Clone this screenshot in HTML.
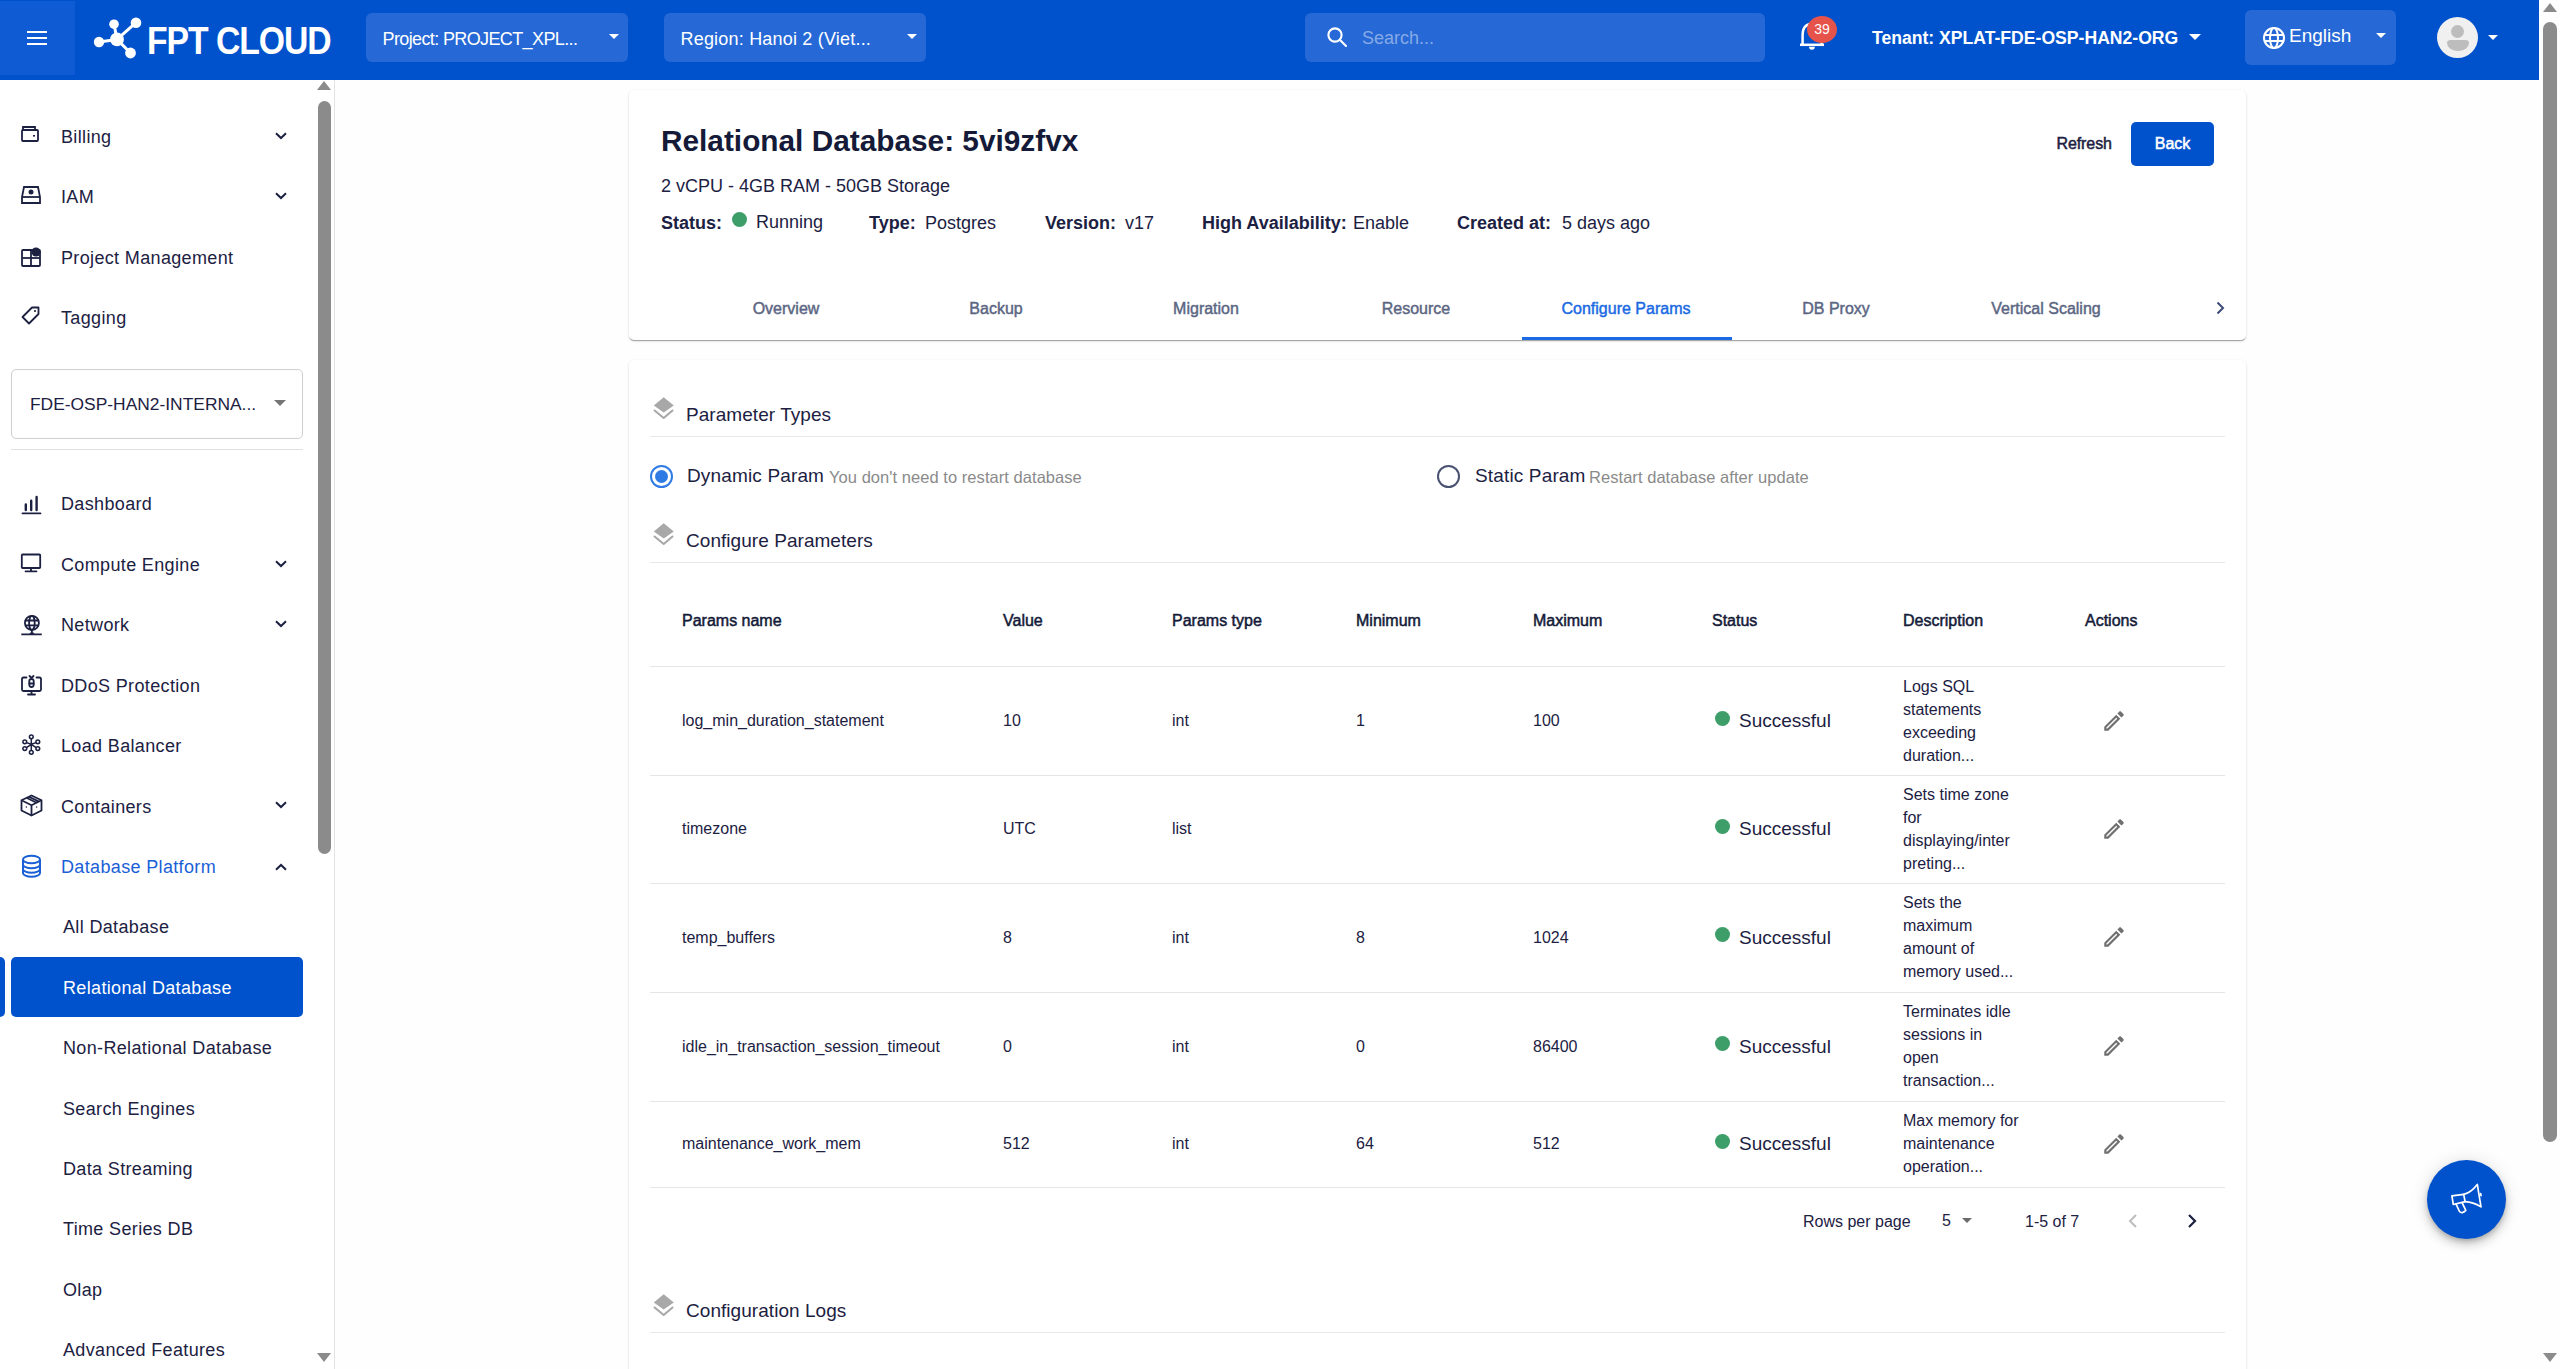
<!DOCTYPE html><html><head><meta charset="utf-8"><style>
*{margin:0;padding:0;box-sizing:border-box}
html,body{width:2560px;height:1369px;overflow:hidden;background:#fefefe;font-family:"Liberation Sans",sans-serif}
.t{position:absolute;white-space:nowrap;line-height:40px;height:40px}
.a{position:absolute}
svg{position:absolute;overflow:visible}
</style></head><body>
<div class="a" style="left:0;top:0;width:2539px;height:80px;background:#0052cc"></div>
<div class="a" style="left:0;top:1px;width:75px;height:74px;background:#0f5bd3"></div>
<div class="a" style="left:26.8px;top:30.9px;width:20.7px;height:2.3px;background:#fff"></div>
<div class="a" style="left:26.8px;top:36.7px;width:20.7px;height:2.3px;background:#fff"></div>
<div class="a" style="left:26.8px;top:42.5px;width:20.7px;height:2.3px;background:#fff"></div>
<svg style="left:90px;top:14px" width="56" height="48" viewBox="0 0 56 48">
<g stroke="#fff" stroke-width="3" fill="none"><line x1="27" y1="25.4" x2="24" y2="10.2"/><line x1="27" y1="25.4" x2="46" y2="8.7"/><line x1="27" y1="25.4" x2="9" y2="28"/><line x1="27" y1="25.4" x2="40.5" y2="39"/></g>
<g fill="#fff"><circle cx="27" cy="25.4" r="6.9"/><circle cx="24" cy="10.2" r="4.8"/><circle cx="46" cy="8.7" r="5.3"/><circle cx="9" cy="28" r="5.2"/><circle cx="40.5" cy="39" r="5.4"/></g></svg>
<div class="t" style="left:146.8px;top:20.5px;font-size:39px;font-weight:700;color:#fff;letter-spacing:-1.2px;transform:scaleX(0.865);transform-origin:0 50%">FPT CLOUD</div>
<div class="a" style="left:366px;top:13px;width:262px;height:49px;background:#2669d6;border-radius:6px"></div>
<div class="t" style="left:382.5px;top:18.6px;font-size:18px;font-weight:400;color:#fff;letter-spacing:-0.62px;">Project: PROJECT_XPL...</div>
<div class="a" style="left:609px;top:34px;width:0;height:0;border-left:5.5px solid transparent;border-right:5.5px solid transparent;border-top:5.5px solid #fff"></div>
<div class="a" style="left:664px;top:13px;width:262px;height:49px;background:#2669d6;border-radius:6px"></div>
<div class="t" style="left:680.5px;top:18.6px;font-size:18px;font-weight:400;color:#fff;letter-spacing:0.2px;">Region: Hanoi 2 (Viet...</div>
<div class="a" style="left:907px;top:34px;width:0;height:0;border-left:5.5px solid transparent;border-right:5.5px solid transparent;border-top:5.5px solid #fff"></div>
<div class="a" style="left:1305px;top:13px;width:460px;height:49px;background:#2669d6;border-radius:6px"></div>
<svg style="left:1315px;top:15px" width="50" height="45" viewBox="0 0 50 45"><g fill="none" stroke="#fff" stroke-width="2.1" stroke-linecap="round"><circle cx="20" cy="20" r="6.6"/><path d="M24.8 24.8 31 31"/></g></svg>
<div class="t" style="left:1362px;top:18.0px;font-size:18px;font-weight:400;color:#86a9e6;letter-spacing:0px;">Search...</div>
<svg style="left:1795px;top:15px" width="35" height="40" viewBox="0 0 35 40"><g fill="none" stroke="#fff" stroke-width="2.5"><path d="M7.6 30V20Q7.6 9.5 17 8.5Q26.6 9.5 26.6 20V30"/><path d="M5 29.8H29"/></g><path d="M14 31.8h5.8a2.9 2.9 0 0 1 -5.8 0z" fill="#fff"/></svg>
<div class="a" style="left:1807px;top:16px;width:30px;height:27px;border-radius:15px/13.5px;background:#e5534b;color:#fff;font-size:14px;line-height:27px;text-align:center">39</div>
<div class="t" style="left:1872px;top:18.0px;font-size:17.6px;font-weight:700;color:#fff;letter-spacing:0px;">Tenant: XPLAT-FDE-OSP-HAN2-ORG</div>
<div class="a" style="left:2189px;top:34px;width:0;height:0;border-left:6px solid transparent;border-right:6px solid transparent;border-top:6px solid #fff"></div>
<div class="a" style="left:2245px;top:10px;width:151px;height:55px;background:#2669d6;border-radius:6px"></div>
<svg style="left:2262px;top:26px" width="24" height="24" viewBox="0 0 24 24"><g fill="none" stroke="#fff" stroke-width="2"><circle cx="12" cy="12" r="10"/><ellipse cx="12" cy="12" rx="4" ry="10"/><line x1="2" y1="9" x2="22" y2="9"/><line x1="2" y1="15" x2="22" y2="15"/></g></svg>
<div class="t" style="left:2289px;top:16.0px;font-size:19px;font-weight:400;color:#fff;letter-spacing:0px;">English</div>
<div class="a" style="left:2376px;top:33px;width:0;height:0;border-left:5.5px solid transparent;border-right:5.5px solid transparent;border-top:5.5px solid #fff"></div>
<div class="a" style="left:2437px;top:17px;width:41px;height:41px;border-radius:21px;background:#f0f0f0"></div>
<div class="a" style="left:2451px;top:24.5px;width:13px;height:13px;border-radius:7px;background:#bdbdbd"></div>
<div class="a" style="left:2447px;top:40px;width:21.5px;height:10.5px;border-radius:4px 4px 11px 11px/3px 3px 9px 9px;background:#bdbdbd"></div>
<div class="a" style="left:2488px;top:35px;width:0;height:0;border-left:5.5px solid transparent;border-right:5.5px solid transparent;border-top:5.5px solid #fff"></div>
<div class="a" style="left:2539px;top:0;width:21px;height:1369px;background:#fefefe"></div>
<div class="a" style="left:2543px;top:3px;width:0;height:0;border-left:7px solid transparent;border-right:7px solid transparent;border-bottom:9px solid #8b8b8b"></div>
<div class="a" style="left:2543px;top:22px;width:14px;height:1120px;border-radius:7px;background:#8b8b8b"></div>
<div class="a" style="left:2543px;top:1353px;width:0;height:0;border-left:7px solid transparent;border-right:7px solid transparent;border-top:9px solid #8b8b8b"></div>
<div class="a" style="left:0;top:80px;width:335px;height:1289px;background:#fff;border-right:1px solid #e3e3e3"></div>
<div class="a" style="left:317px;top:81px;width:0;height:0;border-left:7px solid transparent;border-right:7px solid transparent;border-bottom:9px solid #8b8b8b"></div>
<div class="a" style="left:317.7px;top:101px;width:13.3px;height:753px;border-radius:7px;background:#8b8b8b"></div>
<div class="a" style="left:317px;top:1353px;width:0;height:0;border-left:7px solid transparent;border-right:7px solid transparent;border-top:9px solid #8b8b8b"></div>
<div class="t" style="left:61px;top:116.5px;font-size:18px;font-weight:400;color:#1c2142;letter-spacing:0.35px;">Billing</div>
<svg style="left:275px;top:131.5px" width="12" height="8" viewBox="0 0 12 8"><path d="M1 1.2 6 6 11 1.2" fill="none" stroke="#1c2142" stroke-width="2"/></svg>
<div class="t" style="left:61px;top:177.3px;font-size:18px;font-weight:400;color:#1c2142;letter-spacing:0.35px;">IAM</div>
<svg style="left:275px;top:192.3px" width="12" height="8" viewBox="0 0 12 8"><path d="M1 1.2 6 6 11 1.2" fill="none" stroke="#1c2142" stroke-width="2"/></svg>
<div class="t" style="left:61px;top:237.5px;font-size:18px;font-weight:400;color:#1c2142;letter-spacing:0.35px;">Project Management</div>
<div class="t" style="left:61px;top:297.5px;font-size:18px;font-weight:400;color:#1c2142;letter-spacing:0.35px;">Tagging</div>
<svg style="left:21px;top:126px" width="18" height="16" viewBox="0 0 18 16"><g fill="none" stroke="#1c2142" stroke-width="1.8"><rect x="1" y="4" width="16" height="11" rx="1"/><path d="M2 4V1h12v3"/></g><rect x="12" y="9" width="2" height="1.6" fill="#1c2142"/></svg>
<svg style="left:21px;top:185px" width="20" height="19" viewBox="0 0 20 19"><g fill="none" stroke="#1c2142" stroke-width="1.8"><path d="M3 2h14l2 10v6H1v-6z"/><line x1="1" y1="12" x2="19" y2="12"/></g><circle cx="10" cy="7" r="2.5" fill="#1c2142"/></svg>
<svg style="left:21px;top:247px" width="20" height="20" viewBox="0 0 20 20"><g fill="none" stroke="#1c2142" stroke-width="1.8"><rect x="1" y="3" width="18" height="16" rx="1"/><line x1="10" y1="3" x2="10" y2="19"/><line x1="1" y1="11" x2="19" y2="11"/></g><circle cx="15" cy="5" r="4.5" fill="#1c2142"/></svg>
<svg style="left:21px;top:306px" width="19" height="19" viewBox="0 0 19 19"><path d="M11 1.5h6.5V8L8 17.5 1.5 11z" fill="none" stroke="#1c2142" stroke-width="1.8" stroke-linejoin="round"/><circle cx="14" cy="5" r="1.1" fill="#1c2142"/></svg>
<div class="a" style="left:11px;top:369px;width:292px;height:70px;border:1px solid #cfcfcf;border-radius:5px;background:#fff"></div>
<div class="t" style="left:30px;top:384.0px;font-size:17.4px;font-weight:400;color:#1c2142;letter-spacing:0px;">FDE-OSP-HAN2-INTERNA...</div>
<div class="a" style="left:274px;top:400px;width:0;height:0;border-left:6px solid transparent;border-right:6px solid transparent;border-top:6px solid #757575"></div>
<div class="a" style="left:11px;top:449px;width:292px;height:1px;background:#e0e0e0"></div>
<div class="t" style="left:61px;top:484.3px;font-size:18px;font-weight:400;color:#1c2142;letter-spacing:0.35px;">Dashboard</div>
<div class="t" style="left:61px;top:544.7px;font-size:18px;font-weight:400;color:#1c2142;letter-spacing:0.35px;">Compute Engine</div>
<svg style="left:275px;top:559.73px" width="12" height="8" viewBox="0 0 12 8"><path d="M1 1.2 6 6 11 1.2" fill="none" stroke="#1c2142" stroke-width="2"/></svg>
<div class="t" style="left:61px;top:605.2px;font-size:18px;font-weight:400;color:#1c2142;letter-spacing:0.35px;">Network</div>
<svg style="left:275px;top:620.16px" width="12" height="8" viewBox="0 0 12 8"><path d="M1 1.2 6 6 11 1.2" fill="none" stroke="#1c2142" stroke-width="2"/></svg>
<div class="t" style="left:61px;top:665.6px;font-size:18px;font-weight:400;color:#1c2142;letter-spacing:0.35px;">DDoS Protection</div>
<div class="t" style="left:61px;top:726.0px;font-size:18px;font-weight:400;color:#1c2142;letter-spacing:0.35px;">Load Balancer</div>
<div class="t" style="left:61px;top:786.5px;font-size:18px;font-weight:400;color:#1c2142;letter-spacing:0.35px;">Containers</div>
<svg style="left:275px;top:801.45px" width="12" height="8" viewBox="0 0 12 8"><path d="M1 1.2 6 6 11 1.2" fill="none" stroke="#1c2142" stroke-width="2"/></svg>
<div class="t" style="left:61px;top:846.9px;font-size:18px;font-weight:400;color:#1a5fd6;letter-spacing:0.35px;">Database Platform</div>
<svg style="left:275px;top:862.88px" width="12" height="8" viewBox="0 0 12 8"><path d="M1 6.8 6 2 11 6.8" fill="none" stroke="#1c2142" stroke-width="2"/></svg>
<svg style="left:21px;top:495px" width="21" height="20" viewBox="0 0 21 20"><g stroke="#1c2142" stroke-linecap="round" fill="none"><path d="M4.8 9.5v5.5M10.2 5.8v9.2M15.6 2v13" stroke-width="2.4"/><path d="M1.5 18.4h18" stroke-width="1.8"/></g></svg>
<svg style="left:20px;top:553px" width="22" height="20" viewBox="0 0 22 20"><g stroke="#1c2142" fill="none" stroke-width="1.8" stroke-linecap="round"><rect x="1.8" y="1.5" width="18.4" height="13.5" rx="0.8"/><path d="M11 15v3.2M5.5 18.3h11"/></g></svg>
<svg style="left:20px;top:613px" width="23" height="23" viewBox="0 0 23 23"><g stroke="#1c2142" fill="none" stroke-width="1.8"><circle cx="11.9" cy="9.9" r="7"/><ellipse cx="11.9" cy="9.9" rx="2.8" ry="7"/><path d="M5 7.5h13.8M5 12.3h13.8"/><path d="M1.3 21.4h20.5M11.9 17v2.5l-2.2 1.9M11.9 19.5l2.2 1.9"/></g></svg>
<svg style="left:20px;top:674px" width="23" height="23" viewBox="0 0 23 23"><g stroke="#1c2142" fill="none" stroke-width="1.8" stroke-linecap="round"><path d="M6.5 3.5H3.5Q2 3.5 2 5v10.5Q2 17 3.5 17h16Q21 17 21 15.5V5Q21 3.5 19.5 3.5h-3"/><path d="M11.5 17v3.5M8 20.5h7"/><rect x="9.3" y="5" width="4.4" height="8" rx="2.2"/><path d="M9.5 2l2 2 2-2M9.3 9.5h4.4"/></g></svg>
<svg style="left:20px;top:733px" width="23" height="23" viewBox="0 0 23 23"><g stroke="#1c2142" fill="none" stroke-width="1.5"><circle cx="11.3" cy="3.8" r="1.9"/><circle cx="4.8" cy="8.8" r="1.9"/><circle cx="17.8" cy="8.8" r="1.9"/><circle cx="4.8" cy="15.6" r="1.9"/><circle cx="17.8" cy="15.6" r="1.9"/><circle cx="11.3" cy="19.3" r="1.9"/><path d="M11.3 5.7v11.7M11.3 11.3l-4.8-1.7M11.3 11.3l4.8-1.7M11.3 11.3l-4.8 3.3M11.3 11.3l4.8 3.3"/></g></svg>
<svg style="left:20px;top:794px" width="23" height="23" viewBox="0 0 23 23"><g stroke="#1c2142" fill="none" stroke-width="1.8" stroke-linejoin="round"><path d="M11.5 1.5 21.5 6.3v10.2L11.5 21.5 1.5 16.5V6.3z"/><path d="M1.5 6.3 11.5 11.2 21.5 6.3M11.5 11.2v10.3M6.5 3.8l10 5M9 2.7l10 4.9"/></g><circle cx="6.4" cy="13" r="0.8" fill="#1c2142"/><circle cx="16.6" cy="13" r="0.8" fill="#1c2142"/></svg>
<svg style="left:21px;top:854px" width="21" height="24" viewBox="0 0 21 24"><g stroke="#1a5fd6" fill="none" stroke-width="2"><ellipse cx="10.5" cy="5.5" rx="8.5" ry="3.8"/><path d="M2 5.5v13.5c0 2.1 3.8 3.8 8.5 3.8s8.5-1.7 8.5-3.8V5.5M2 10.5c0 2.1 3.8 3.8 8.5 3.8s8.5-1.7 8.5-3.8M2 15c0 2.1 3.8 3.8 8.5 3.8s8.5-1.7 8.5-3.8"/></g></svg>
<div class="a" style="left:11px;top:957px;width:292px;height:60px;border-radius:5px;background:#0052cc"></div>
<div class="a" style="left:-6px;top:957px;width:11px;height:60px;border-radius:5px;background:#0052cc"></div>
<div class="t" style="left:63px;top:907.3px;font-size:18px;font-weight:400;color:#1c2142;letter-spacing:0.35px;">All Database</div>
<div class="t" style="left:63px;top:967.7px;font-size:18px;font-weight:400;color:#fff;letter-spacing:0.35px;">Relational Database</div>
<div class="t" style="left:63px;top:1028.2px;font-size:18px;font-weight:400;color:#1c2142;letter-spacing:0.35px;">Non-Relational Database</div>
<div class="t" style="left:63px;top:1088.6px;font-size:18px;font-weight:400;color:#1c2142;letter-spacing:0.35px;">Search Engines</div>
<div class="t" style="left:63px;top:1149.0px;font-size:18px;font-weight:400;color:#1c2142;letter-spacing:0.35px;">Data Streaming</div>
<div class="t" style="left:63px;top:1209.4px;font-size:18px;font-weight:400;color:#1c2142;letter-spacing:0.35px;">Time Series DB</div>
<div class="t" style="left:63px;top:1269.9px;font-size:18px;font-weight:400;color:#1c2142;letter-spacing:0.35px;">Olap</div>
<div class="t" style="left:63px;top:1330.3px;font-size:18px;font-weight:400;color:#1c2142;letter-spacing:0.35px;">Advanced Features</div>
<div class="a" style="left:629px;top:90px;width:1617px;height:250px;background:#fff;border-radius:5px;box-shadow:0 2px 1px -1px rgba(0,0,0,.2),0 1px 1px 0 rgba(0,0,0,.14),0 1px 3px 0 rgba(0,0,0,.12)"></div>
<div class="t" style="left:661px;top:121.1px;font-size:29.8px;font-weight:700;color:#141a38;letter-spacing:0px;">Relational Database: 5vi9zfvx</div>
<div class="t" style="left:661px;top:166.0px;font-size:18px;font-weight:400;color:#1c2142;letter-spacing:0px;">2 vCPU - 4GB RAM - 50GB Storage</div>
<div class="t" style="left:2056.5px;top:123.5px;font-size:16px;font-weight:400;color:#1c2142;letter-spacing:-0.1px;-webkit-text-stroke:0.5px #1c2142">Refresh</div>
<div class="a" style="left:2131px;top:122px;width:83px;height:44px;background:#0052cc;border-radius:5px;color:#fff;font-size:16px;font-weight:400;-webkit-text-stroke:0.5px #fff;line-height:44px;text-align:center">Back</div>
<div class="t" style="left:661px;top:202.8px;font-size:18px;font-weight:700;color:#1c2142;letter-spacing:0px;">Status:</div>
<div class="a" style="left:732px;top:212px;width:15px;height:15px;border-radius:8px;background:#3d9e6a"></div>
<div class="t" style="left:756px;top:202.0px;font-size:18px;font-weight:400;color:#1c2142;letter-spacing:0px;">Running</div>
<div class="t" style="left:869px;top:202.5px;font-size:18px;font-weight:700;color:#1c2142;letter-spacing:0px;">Type:</div>
<div class="t" style="left:925px;top:202.5px;font-size:18px;font-weight:400;color:#1c2142;letter-spacing:0px;">Postgres</div>
<div class="t" style="left:1045px;top:202.5px;font-size:18px;font-weight:700;color:#1c2142;letter-spacing:0px;">Version:</div>
<div class="t" style="left:1125px;top:202.5px;font-size:18px;font-weight:400;color:#1c2142;letter-spacing:0px;">v17</div>
<div class="t" style="left:1202px;top:202.5px;font-size:18px;font-weight:700;color:#1c2142;letter-spacing:0px;">High Availability:</div>
<div class="t" style="left:1353px;top:202.5px;font-size:18px;font-weight:400;color:#1c2142;letter-spacing:0px;">Enable</div>
<div class="t" style="left:1457px;top:202.5px;font-size:18px;font-weight:700;color:#1c2142;letter-spacing:0px;">Created at:</div>
<div class="t" style="left:1562px;top:202.5px;font-size:18px;font-weight:400;color:#1c2142;letter-spacing:0px;">5 days ago</div>
<div class="t" style="left:681px;top:288.6px;width:210px;text-align:center;font-size:16px;font-weight:400;-webkit-text-stroke:0.45px #5b6683;color:#5b6683">Overview</div>
<div class="t" style="left:891px;top:288.6px;width:210px;text-align:center;font-size:16px;font-weight:400;-webkit-text-stroke:0.45px #5b6683;color:#5b6683">Backup</div>
<div class="t" style="left:1101px;top:288.6px;width:210px;text-align:center;font-size:16px;font-weight:400;-webkit-text-stroke:0.45px #5b6683;color:#5b6683">Migration</div>
<div class="t" style="left:1311px;top:288.6px;width:210px;text-align:center;font-size:16px;font-weight:400;-webkit-text-stroke:0.45px #5b6683;color:#5b6683">Resource</div>
<div class="t" style="left:1521px;top:288.6px;width:210px;text-align:center;font-size:16px;font-weight:400;-webkit-text-stroke:0.45px #1a6ae3;color:#1a6ae3">Configure Params</div>
<div class="t" style="left:1731px;top:288.6px;width:210px;text-align:center;font-size:16px;font-weight:400;-webkit-text-stroke:0.45px #5b6683;color:#5b6683">DB Proxy</div>
<div class="t" style="left:1941px;top:288.6px;width:210px;text-align:center;font-size:16px;font-weight:400;-webkit-text-stroke:0.45px #5b6683;color:#5b6683">Vertical Scaling</div>
<div class="a" style="left:1522px;top:337px;width:210px;height:3px;background:#1a6ae3"></div>
<svg style="left:2214.5px;top:301px" width="12" height="14" viewBox="0 0 12 14"><path d="M2.5 1.5 8 7 2.5 12.5" fill="none" stroke="#3c4a75" stroke-width="2"/></svg>
<div class="a" style="left:629px;top:360px;width:1617px;height:1100px;background:#fff;border-radius:5px;box-shadow:0 2px 1px -1px rgba(0,0,0,.2),0 1px 1px 0 rgba(0,0,0,.14),0 1px 3px 0 rgba(0,0,0,.12)"></div>
<svg style="left:653px;top:396px" width="22" height="24" viewBox="0 0 22 24"><path d="M10.7 1.2 20.8 9.4 10.7 16.5 0.8 9.4z" fill="#a8a8a8"/><path d="M1.6 14.5 10.7 22 19.5 14.5" fill="none" stroke="#a8a8a8" stroke-width="2.1" stroke-linecap="round" stroke-linejoin="round"/></svg>
<div class="t" style="left:686px;top:394.5px;font-size:19px;font-weight:400;color:#1c2142;letter-spacing:0.05px;">Parameter Types</div>
<div class="a" style="left:650px;top:436px;width:1575px;height:1px;background:#e8e8e8"></div>
<div class="a" style="left:650px;top:465px;width:23px;height:23px;border-radius:12px;border:2.2px solid #2f7be6"></div>
<div class="a" style="left:655px;top:470px;width:13px;height:13px;border-radius:7px;background:#2f7be6"></div>
<div class="t" style="left:687px;top:456.0px;font-size:19px;font-weight:400;color:#1c2142;letter-spacing:0.15px;">Dynamic Param</div>
<div class="t" style="left:829px;top:457.0px;font-size:16.5px;font-weight:400;color:#8a8a8a;letter-spacing:0.05px;">You don't need to restart database</div>
<div class="a" style="left:1437px;top:465px;width:23px;height:23px;border-radius:12px;border:2.2px solid #4a5272"></div>
<div class="t" style="left:1475px;top:456.0px;font-size:19px;font-weight:400;color:#1c2142;letter-spacing:0.15px;">Static Param</div>
<div class="t" style="left:1589px;top:457.0px;font-size:16.5px;font-weight:400;color:#8a8a8a;letter-spacing:0.05px;">Restart database after update</div>
<svg style="left:653px;top:522px" width="22" height="24" viewBox="0 0 22 24"><path d="M10.7 1.2 20.8 9.4 10.7 16.5 0.8 9.4z" fill="#a8a8a8"/><path d="M1.6 14.5 10.7 22 19.5 14.5" fill="none" stroke="#a8a8a8" stroke-width="2.1" stroke-linecap="round" stroke-linejoin="round"/></svg>
<div class="t" style="left:686px;top:520.5px;font-size:19px;font-weight:400;color:#1c2142;letter-spacing:0.05px;">Configure Parameters</div>
<div class="a" style="left:650px;top:562px;width:1575px;height:1px;background:#e8e8e8"></div>
<div class="t" style="left:682px;top:601.0px;font-size:16px;font-weight:400;color:#141a38;letter-spacing:0px;-webkit-text-stroke:0.5px #141a38">Params name</div>
<div class="t" style="left:1003px;top:601.0px;font-size:16px;font-weight:400;color:#141a38;letter-spacing:0px;-webkit-text-stroke:0.5px #141a38">Value</div>
<div class="t" style="left:1172px;top:601.0px;font-size:16px;font-weight:400;color:#141a38;letter-spacing:0px;-webkit-text-stroke:0.5px #141a38">Params type</div>
<div class="t" style="left:1356px;top:601.0px;font-size:16px;font-weight:400;color:#141a38;letter-spacing:0px;-webkit-text-stroke:0.5px #141a38">Minimum</div>
<div class="t" style="left:1533px;top:601.0px;font-size:16px;font-weight:400;color:#141a38;letter-spacing:0px;-webkit-text-stroke:0.5px #141a38">Maximum</div>
<div class="t" style="left:1712px;top:601.0px;font-size:16px;font-weight:400;color:#141a38;letter-spacing:0px;-webkit-text-stroke:0.5px #141a38">Status</div>
<div class="t" style="left:1903px;top:601.0px;font-size:16px;font-weight:400;color:#141a38;letter-spacing:0px;-webkit-text-stroke:0.5px #141a38">Description</div>
<div class="t" style="left:2085px;top:601.0px;font-size:16px;font-weight:400;color:#141a38;letter-spacing:0px;-webkit-text-stroke:0.5px #141a38">Actions</div>
<div class="a" style="left:650px;top:666px;width:1575px;height:1px;background:#e6e6e6"></div>
<div class="t" style="left:682px;top:701.0px;font-size:16px;font-weight:400;color:#1c2142;letter-spacing:0px;">log_min_duration_statement</div>
<div class="t" style="left:1003px;top:701.0px;font-size:16px;font-weight:400;color:#1c2142;letter-spacing:0px;">10</div>
<div class="t" style="left:1172px;top:701.0px;font-size:16px;font-weight:400;color:#1c2142;letter-spacing:0px;">int</div>
<div class="t" style="left:1356px;top:701.0px;font-size:16px;font-weight:400;color:#1c2142;letter-spacing:0px;">1</div>
<div class="t" style="left:1533px;top:701.0px;font-size:16px;font-weight:400;color:#1c2142;letter-spacing:0px;">100</div>
<div class="a" style="left:1715px;top:710.7px;width:15px;height:15px;border-radius:8px;background:#3d9e6a"></div>
<div class="t" style="left:1739px;top:701.0px;font-size:19px;font-weight:400;color:#1c2142;letter-spacing:0px;">Successful</div>
<div class="t" style="left:1903px;top:666.5px;font-size:16px;font-weight:400;color:#1c2142;letter-spacing:0px;">Logs SQL</div>
<div class="t" style="left:1903px;top:689.5px;font-size:16px;font-weight:400;color:#1c2142;letter-spacing:0px;">statements</div>
<div class="t" style="left:1903px;top:712.5px;font-size:16px;font-weight:400;color:#1c2142;letter-spacing:0px;">exceeding</div>
<div class="t" style="left:1903px;top:735.5px;font-size:16px;font-weight:400;color:#1c2142;letter-spacing:0px;">duration...</div>
<svg style="left:2101px;top:707.5px" width="26" height="26" viewBox="0 0 24 24"><path fill="#707070" d="M3 17.25V21h3.75L17.81 9.94l-3.75-3.75L3 17.25zM5.92 19H5v-.92l9.06-9.06.92.92L5.92 19zM20.71 5.63l-2.34-2.34c-.2-.2-.45-.29-.71-.29s-.51.1-.7.29l-1.83 1.83 3.75 3.75 1.83-1.83c.39-.39.39-1.02 0-1.41z"/></svg>
<div class="a" style="left:650px;top:775px;width:1575px;height:1px;background:#e6e6e6"></div>
<div class="t" style="left:682px;top:809.0px;font-size:16px;font-weight:400;color:#1c2142;letter-spacing:0px;">timezone</div>
<div class="t" style="left:1003px;top:809.0px;font-size:16px;font-weight:400;color:#1c2142;letter-spacing:0px;">UTC</div>
<div class="t" style="left:1172px;top:809.0px;font-size:16px;font-weight:400;color:#1c2142;letter-spacing:0px;">list</div>
<div class="a" style="left:1715px;top:818.7px;width:15px;height:15px;border-radius:8px;background:#3d9e6a"></div>
<div class="t" style="left:1739px;top:809.0px;font-size:19px;font-weight:400;color:#1c2142;letter-spacing:0px;">Successful</div>
<div class="t" style="left:1903px;top:774.5px;font-size:16px;font-weight:400;color:#1c2142;letter-spacing:0px;">Sets time zone</div>
<div class="t" style="left:1903px;top:797.5px;font-size:16px;font-weight:400;color:#1c2142;letter-spacing:0px;">for</div>
<div class="t" style="left:1903px;top:820.5px;font-size:16px;font-weight:400;color:#1c2142;letter-spacing:0px;">displaying/inter</div>
<div class="t" style="left:1903px;top:843.5px;font-size:16px;font-weight:400;color:#1c2142;letter-spacing:0px;">preting...</div>
<svg style="left:2101px;top:815.5px" width="26" height="26" viewBox="0 0 24 24"><path fill="#707070" d="M3 17.25V21h3.75L17.81 9.94l-3.75-3.75L3 17.25zM5.92 19H5v-.92l9.06-9.06.92.92L5.92 19zM20.71 5.63l-2.34-2.34c-.2-.2-.45-.29-.71-.29s-.51.1-.7.29l-1.83 1.83 3.75 3.75 1.83-1.83c.39-.39.39-1.02 0-1.41z"/></svg>
<div class="a" style="left:650px;top:883px;width:1575px;height:1px;background:#e6e6e6"></div>
<div class="t" style="left:682px;top:917.5px;font-size:16px;font-weight:400;color:#1c2142;letter-spacing:0px;">temp_buffers</div>
<div class="t" style="left:1003px;top:917.5px;font-size:16px;font-weight:400;color:#1c2142;letter-spacing:0px;">8</div>
<div class="t" style="left:1172px;top:917.5px;font-size:16px;font-weight:400;color:#1c2142;letter-spacing:0px;">int</div>
<div class="t" style="left:1356px;top:917.5px;font-size:16px;font-weight:400;color:#1c2142;letter-spacing:0px;">8</div>
<div class="t" style="left:1533px;top:917.5px;font-size:16px;font-weight:400;color:#1c2142;letter-spacing:0px;">1024</div>
<div class="a" style="left:1715px;top:927.2px;width:15px;height:15px;border-radius:8px;background:#3d9e6a"></div>
<div class="t" style="left:1739px;top:917.5px;font-size:19px;font-weight:400;color:#1c2142;letter-spacing:0px;">Successful</div>
<div class="t" style="left:1903px;top:883.0px;font-size:16px;font-weight:400;color:#1c2142;letter-spacing:0px;">Sets the</div>
<div class="t" style="left:1903px;top:906.0px;font-size:16px;font-weight:400;color:#1c2142;letter-spacing:0px;">maximum</div>
<div class="t" style="left:1903px;top:929.0px;font-size:16px;font-weight:400;color:#1c2142;letter-spacing:0px;">amount of</div>
<div class="t" style="left:1903px;top:952.0px;font-size:16px;font-weight:400;color:#1c2142;letter-spacing:0px;">memory used...</div>
<svg style="left:2101px;top:924.0px" width="26" height="26" viewBox="0 0 24 24"><path fill="#707070" d="M3 17.25V21h3.75L17.81 9.94l-3.75-3.75L3 17.25zM5.92 19H5v-.92l9.06-9.06.92.92L5.92 19zM20.71 5.63l-2.34-2.34c-.2-.2-.45-.29-.71-.29s-.51.1-.7.29l-1.83 1.83 3.75 3.75 1.83-1.83c.39-.39.39-1.02 0-1.41z"/></svg>
<div class="a" style="left:650px;top:992px;width:1575px;height:1px;background:#e6e6e6"></div>
<div class="t" style="left:682px;top:1026.5px;font-size:16px;font-weight:400;color:#1c2142;letter-spacing:0px;">idle_in_transaction_session_timeout</div>
<div class="t" style="left:1003px;top:1026.5px;font-size:16px;font-weight:400;color:#1c2142;letter-spacing:0px;">0</div>
<div class="t" style="left:1172px;top:1026.5px;font-size:16px;font-weight:400;color:#1c2142;letter-spacing:0px;">int</div>
<div class="t" style="left:1356px;top:1026.5px;font-size:16px;font-weight:400;color:#1c2142;letter-spacing:0px;">0</div>
<div class="t" style="left:1533px;top:1026.5px;font-size:16px;font-weight:400;color:#1c2142;letter-spacing:0px;">86400</div>
<div class="a" style="left:1715px;top:1036.2px;width:15px;height:15px;border-radius:8px;background:#3d9e6a"></div>
<div class="t" style="left:1739px;top:1026.5px;font-size:19px;font-weight:400;color:#1c2142;letter-spacing:0px;">Successful</div>
<div class="t" style="left:1903px;top:992.0px;font-size:16px;font-weight:400;color:#1c2142;letter-spacing:0px;">Terminates idle</div>
<div class="t" style="left:1903px;top:1015.0px;font-size:16px;font-weight:400;color:#1c2142;letter-spacing:0px;">sessions in</div>
<div class="t" style="left:1903px;top:1038.0px;font-size:16px;font-weight:400;color:#1c2142;letter-spacing:0px;">open</div>
<div class="t" style="left:1903px;top:1061.0px;font-size:16px;font-weight:400;color:#1c2142;letter-spacing:0px;">transaction...</div>
<svg style="left:2101px;top:1033.0px" width="26" height="26" viewBox="0 0 24 24"><path fill="#707070" d="M3 17.25V21h3.75L17.81 9.94l-3.75-3.75L3 17.25zM5.92 19H5v-.92l9.06-9.06.92.92L5.92 19zM20.71 5.63l-2.34-2.34c-.2-.2-.45-.29-.71-.29s-.51.1-.7.29l-1.83 1.83 3.75 3.75 1.83-1.83c.39-.39.39-1.02 0-1.41z"/></svg>
<div class="a" style="left:650px;top:1101px;width:1575px;height:1px;background:#e6e6e6"></div>
<div class="t" style="left:682px;top:1124.0px;font-size:16px;font-weight:400;color:#1c2142;letter-spacing:0px;">maintenance_work_mem</div>
<div class="t" style="left:1003px;top:1124.0px;font-size:16px;font-weight:400;color:#1c2142;letter-spacing:0px;">512</div>
<div class="t" style="left:1172px;top:1124.0px;font-size:16px;font-weight:400;color:#1c2142;letter-spacing:0px;">int</div>
<div class="t" style="left:1356px;top:1124.0px;font-size:16px;font-weight:400;color:#1c2142;letter-spacing:0px;">64</div>
<div class="t" style="left:1533px;top:1124.0px;font-size:16px;font-weight:400;color:#1c2142;letter-spacing:0px;">512</div>
<div class="a" style="left:1715px;top:1133.7px;width:15px;height:15px;border-radius:8px;background:#3d9e6a"></div>
<div class="t" style="left:1739px;top:1124.0px;font-size:19px;font-weight:400;color:#1c2142;letter-spacing:0px;">Successful</div>
<div class="t" style="left:1903px;top:1101.0px;font-size:16px;font-weight:400;color:#1c2142;letter-spacing:0px;">Max memory for</div>
<div class="t" style="left:1903px;top:1124.0px;font-size:16px;font-weight:400;color:#1c2142;letter-spacing:0px;">maintenance</div>
<div class="t" style="left:1903px;top:1147.0px;font-size:16px;font-weight:400;color:#1c2142;letter-spacing:0px;">operation...</div>
<svg style="left:2101px;top:1130.5px" width="26" height="26" viewBox="0 0 24 24"><path fill="#707070" d="M3 17.25V21h3.75L17.81 9.94l-3.75-3.75L3 17.25zM5.92 19H5v-.92l9.06-9.06.92.92L5.92 19zM20.71 5.63l-2.34-2.34c-.2-.2-.45-.29-.71-.29s-.51.1-.7.29l-1.83 1.83 3.75 3.75 1.83-1.83c.39-.39.39-1.02 0-1.41z"/></svg>
<div class="a" style="left:650px;top:1187px;width:1575px;height:1px;background:#e6e6e6"></div>
<div class="t" style="left:1803px;top:1201.8px;font-size:16px;font-weight:400;color:#1c2142;letter-spacing:0px;">Rows per page</div>
<div class="t" style="left:1942px;top:1201.0px;font-size:16px;font-weight:400;color:#1c2142;letter-spacing:0px;">5</div>
<div class="a" style="left:1962px;top:1218px;width:0;height:0;border-left:5px solid transparent;border-right:5px solid transparent;border-top:5px solid #6b6b6b"></div>
<div class="t" style="left:2025px;top:1201.8px;font-size:16px;font-weight:400;color:#1c2142;letter-spacing:0px;">1-5 of 7</div>
<svg style="left:2127px;top:1213px" width="12" height="16" viewBox="0 0 12 16"><path d="M9 2 3 8 9 14" fill="none" stroke="#bdbdbd" stroke-width="2"/></svg>
<svg style="left:2186px;top:1213px" width="12" height="16" viewBox="0 0 12 16"><path d="M3 2 9 8 3 14" fill="none" stroke="#1c2142" stroke-width="2.2"/></svg>
<svg style="left:653px;top:1293px" width="22" height="24" viewBox="0 0 22 24"><path d="M10.7 1.2 20.8 9.4 10.7 16.5 0.8 9.4z" fill="#a8a8a8"/><path d="M1.6 14.5 10.7 22 19.5 14.5" fill="none" stroke="#a8a8a8" stroke-width="2.1" stroke-linecap="round" stroke-linejoin="round"/></svg>
<div class="t" style="left:686px;top:1290.5px;font-size:19px;font-weight:400;color:#1c2142;letter-spacing:0.05px;">Configuration Logs</div>
<div class="a" style="left:650px;top:1332px;width:1575px;height:1px;background:#e8e8e8"></div>
<div class="a" style="left:2427px;top:1160px;width:78.5px;height:78.5px;border-radius:40px;background:#0052cc;box-shadow:0 3px 5px -1px rgba(0,0,0,.2),0 6px 10px 0 rgba(0,0,0,.14),0 1px 18px 0 rgba(0,0,0,.12)"></div>
<svg style="left:2420px;top:1150px" width="95" height="95" viewBox="0 0 95 95"><g fill="none" stroke="#fff" stroke-width="1.7" stroke-linejoin="round" stroke-linecap="round"><path d="M31.9 45.8 L43.7 44.4 L45.1 51.7 L33.3 54.5 Z"/><path d="M43.7 44.4 Q51 42.5 57.3 34.4 L61 56.9 Q53 52 45.1 51.7"/><path d="M36.1 54.1 L39.5 61.5 Q42 64.2 45.8 60.4 L42.3 53.2"/><path d="M60.6 43.6 l0.5 2"/></g></svg>
</body></html>
